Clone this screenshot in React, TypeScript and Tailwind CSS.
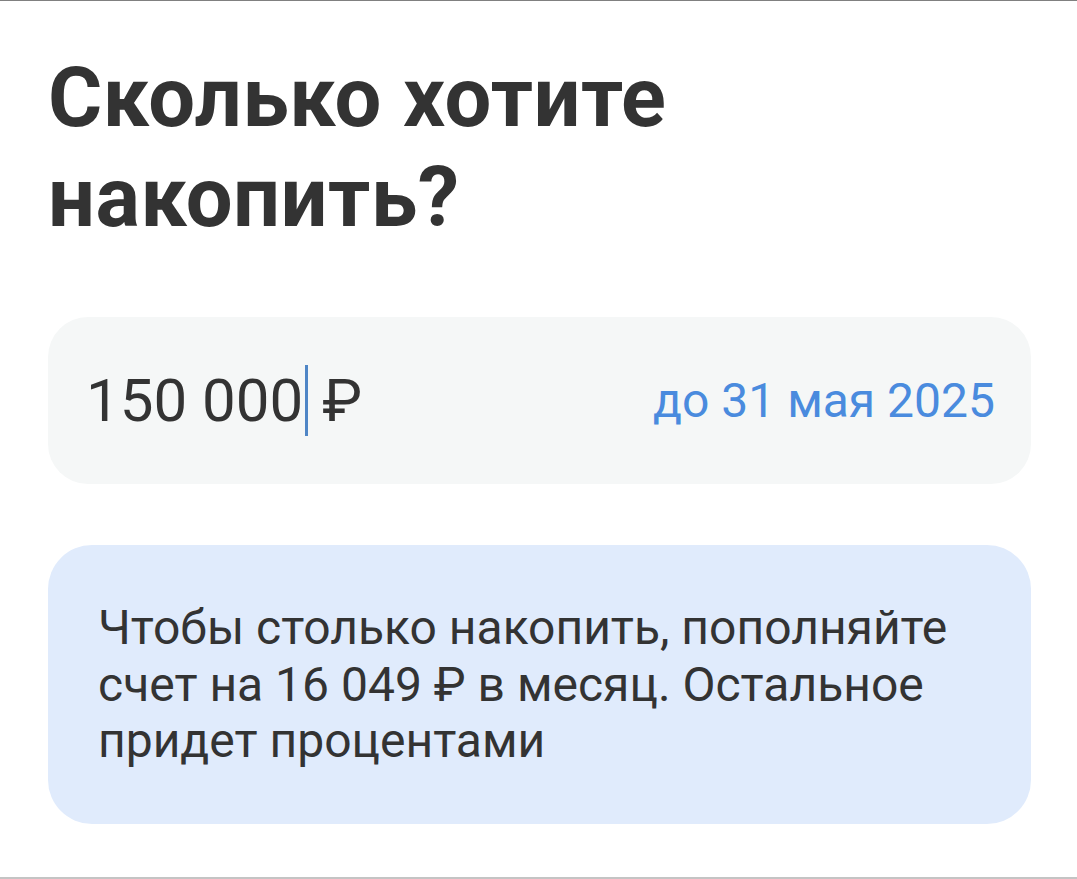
export default function App() {
  return (
    <div className="flex h-[879px] w-full flex-col border-t border-[#808080] bg-white font-['Roboto','Noto_Sans',sans-serif] text-[#333333]">
      <div className="flex flex-1 flex-col pl-12 pr-[46px] pt-[47px]">
        <h1 className="text-[83px] font-bold leading-[100px] tracking-[0.5px]">
          Сколько хотите
          <br />
          накопить?
        </h1>

        <div className="mt-[69px] flex h-[167px] items-center justify-between rounded-[40px] bg-[#f5f7f7] pl-[38px] pr-[36px]">
          <div className="flex items-center text-[60px] leading-none">
            <span>150&nbsp;000</span>
            <span className="mx-[2px] h-[71px] w-[3px] bg-[#4f86c6]" />
            <span className="ml-[12px]">₽</span>
          </div>
          <span className="text-[48px] leading-none text-[#4a8bde]">до 31 мая 2025</span>
        </div>

        <div className="mt-[61px] rounded-[44px] bg-[#e0ebfc] pb-[54px] pl-[50px] pr-[30px] pt-[55px] text-[48px] leading-[56.5px]">
          Чтобы столько накопить, пополняйте
          <br />
          счет на 16&nbsp;049 ₽ в месяц. Остальное
          <br />
          придет процентами
        </div>
      </div>
      <div className="h-[2px] w-full bg-[#c4c4c4]" />
    </div>
  );
}
